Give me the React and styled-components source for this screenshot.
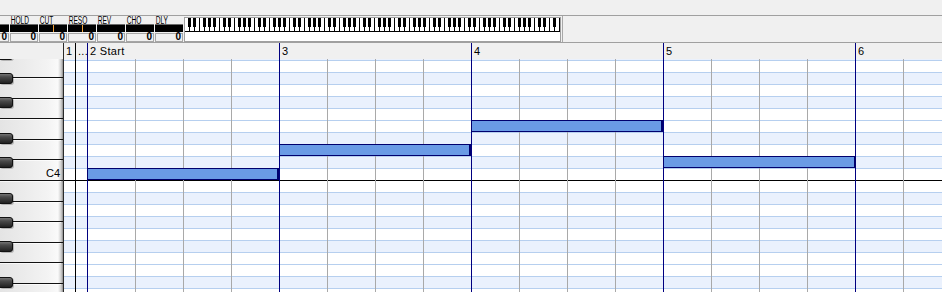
import React from "react";
import styled, { createGlobalStyle } from "styled-components";

const NAVY = "#000080";
const BEAT = "#a9a9a9";
const ROWLINE = "#b6cfef";
const BLACKROW = "#eaf1fd";

const GlobalStyle = createGlobalStyle`
  html, body { margin: 0; padding: 0; background: #f0f0f0; }
  body { font-family: "Liberation Sans", Arial, sans-serif; color: #000; }
`;

const Window = styled.div`
  width: 942px;
  height: 292px;
  overflow: hidden;
  background: #f0f0f0;
  display: flex;
  flex-direction: column;
`;

const TopStrip = styled.div`
  height: 15px;
  flex: none;
  border-bottom: 1px solid #a0a0a0;
`;

const Toolbar = styled.div`
  height: 26px;
  flex: none;
  display: flex;
  border-bottom: 1px solid #a0a0a0;
`;

const ControlSection = styled.div`
  width: 562px;
  flex: none;
  overflow: hidden;
  border-right: 1px solid #a8a8a8;
`;

const ControlStrip = styled.div`
  display: flex;
  gap: 1px;
  margin-left: -19px;
`;

const Param = styled.div`
  width: 28px;
  flex: none;
  display: flex;
  flex-direction: column;
`;

const ParamLabel = styled.div`
  height: 8px;
  box-sizing: border-box;
  padding: 1px 0 0 1px;
  font-size: 10px;
  line-height: 8px;
  white-space: nowrap;
  transform: scaleX(0.66);
  transform-origin: left center;
`;

const ParamBar = styled.div`
  position: relative;
  height: 8px;
  margin-bottom: 1px;
  box-sizing: border-box;
  background: #000;
  border-top: 1px solid #6a6a6a;

  &::after {
    content: "";
    display: ${({ $tick }) => ($tick ? "block" : "none")};
    position: absolute;
    top: 0;
    bottom: 0;
    left: 14px;
    width: 1px;
    background: #f2a33a;
  }
`;

const ParamValue = styled.div`
  height: 9px;
  box-sizing: border-box;
  border: 1px solid #a6a6a6;
  padding-right: 1px;
  text-align: right;
  font-size: 10px;
  font-weight: bold;
  line-height: 6px;
`;

const MiniKeyboard = styled.div`
  flex: none;
  width: 375px;
  height: 23px;
  margin-top: 1px;
  border: 1px solid #a0a0a0;
  background: #fff;

  svg {
    display: block;
  }
`;

const Main = styled.div`
  flex: 1;
  min-height: 0;
  display: flex;
`;

const KeysColumn = styled.div`
  width: 63px;
  flex: none;
  display: flex;
  flex-direction: column;
  border-right: 1px solid #2a2a2a;
`;

const RulerCorner = styled.div`
  height: 16px;
  flex: none;
`;

const Keys = styled.div`
  flex: 1;
  overflow: hidden;

  svg {
    display: block;
  }
`;

const RollColumn = styled.div`
  flex: 1;
  min-width: 0;
  display: flex;
  flex-direction: column;
  overflow: hidden;
`;

const Ruler = styled.div`
  height: 16px;
  flex: none;
  display: flex;
  font-size: 11px;
  line-height: 17px;
  letter-spacing: 0.3px;
`;

const RulerCell = styled.div`
  width: ${({ $w }) => ($w ? `${$w}px` : "auto")};
  flex: ${({ $w }) => ($w ? "none" : "1")};
  box-sizing: border-box;
  padding-left: 2px;
  border-right: ${({ $line }) => ($line ? `1px solid ${$line}` : "none")};
  overflow: hidden;
  white-space: nowrap;
`;

const Grid = styled.div`
  flex: 1;
  overflow: hidden;
  background: #fff;
`;

const Rows = styled.div`
  margin-top: -11px;
  display: flex;
  flex-direction: column;
`;

// vertical lines shared by every row (x relative to grid start)
const VLINES = [[11, "#000"], [23, NAVY]];
for (let m = 0; m < 5; m++) {
  const base = 23 + 192 * m;
  VLINES.push([base + 48, BEAT], [base + 96, BEAT], [base + 144, BEAT]);
  if (m < 4) VLINES.push([base + 192, NAVY]);
}
const vlineLayers = VLINES.map(
  ([x, c]) => `linear-gradient(${c}, ${c}) ${x}px 0 / 1px 100% no-repeat`
).join(", ");

const Row = styled.div`
  position: relative;
  height: 12px;
  flex: none;
  background: ${vlineLayers},
    linear-gradient(${({ $line }) => $line}, ${({ $line }) => $line}) 0 0 / 100% 1px no-repeat,
    ${({ $black }) => ($black ? BLACKROW : "#fff")};
`;

const Note = styled.div`
  position: absolute;
  top: 0;
  left: ${({ $x }) => $x}px;
  width: ${({ $w }) => $w}px;
  height: 12px;
  box-sizing: border-box;
  background: #6a9be5;
  border: 1px solid #00006e;
  border-right-width: 2px;
`;

const BLACK_PC = [1, 3, 6, 8, 10];
const isBlack = (p) => BLACK_PC.includes(p % 12);

const PARAMS = [
  { label: "PAN" },
  { label: "HOLD" },
  { label: "CUT", tick: true },
  { label: "RESO", tick: true },
  { label: "REV" },
  { label: "CHO" },
  { label: "DLY" },
];

const NOTES = [
  { pitch: 60, x: 23, w: 192 },
  { pitch: 62, x: 215, w: 192 },
  { pitch: 64, x: 407, w: 192 },
  { pitch: 61, x: 599, w: 193 },
];

const MEASURES = [
  { w: 12, line: "#000", text: "1" },
  { w: 12, line: NAVY, text: "..." },
  { w: 192, line: NAVY, text: "2 Start" },
  { w: 192, line: NAVY, text: "3" },
  { w: 192, line: NAVY, text: "4" },
  { w: 192, line: NAVY, text: "5" },
  { text: "6" },
];

function MiniKeys() {
  const whites = 75;
  const blackAfter = [0, 1, 3, 4, 5];
  return (
    <svg width="375" height="23" viewBox="0 0 375 23">
      <rect x="0" y="0" width="375" height="23" fill="#fff" />
      {Array.from({ length: whites }, (_, i) => (
        <rect key={`s${i}`} x={i * 5 + 4} y="0" width="1" height="14" fill="#000" />
      ))}
      {Array.from({ length: whites - 1 }, (_, i) =>
        blackAfter.includes(i % 7) ? (
          <rect key={`b${i}`} x={i * 5 + 3} y="0" width="3" height="9" fill="#000" />
        ) : null
      )}
      <rect x="0" y="13" width="375" height="1" fill="#000" />
    </svg>
  );
}

function PianoKeys() {
  const top = 59; // page y of svg top
  const c4Bottom = 180 - top;
  const wk = 144 / 7;
  const bounds = [];
  for (let k = -6; k <= 6; k++) bounds.push(Math.round(c4Bottom + k * wk));
  const blacks = [];
  for (let p = 50; p <= 70; p++) {
    if (isBlack(p)) blacks.push(168 - (p - 60) * 12 - top);
  }
  return (
    <svg width="63" height="233" viewBox="0 0 63 233">
      <defs>
        <linearGradient id="wk" x1="0" y1="0" x2="1" y2="0">
          <stop offset="0" stopColor="#e4e4e4" />
          <stop offset="0.75" stopColor="#f3f3f3" />
          <stop offset="0.92" stopColor="#fafafa" />
          <stop offset="0.97" stopColor="#cfcfcf" />
          <stop offset="1" stopColor="#8c8c8c" />
        </linearGradient>
        <linearGradient id="bk" x1="0" y1="0" x2="0" y2="1">
          <stop offset="0" stopColor="#7a7a7a" />
          <stop offset="0.35" stopColor="#4a4a4a" />
          <stop offset="1" stopColor="#1e1e1e" />
        </linearGradient>
      </defs>
      <rect x="0" y="0" width="63" height="233" fill="url(#wk)" />
      {bounds.map((y) => (
        <g key={`w${y}`}>
          <rect x="0" y={y + 1} width="61" height="1" fill="#ffffff" opacity="0.7" />
          <rect x="0" y={y} width="63" height="1" fill="#111" />
        </g>
      ))}
      {blacks.map((y) => (
        <g key={`k${y}`}>
          <rect x="0" y={y + 2} width="14" height="11" rx="3" fill="#000" opacity="0.22" />
          <rect x="-3" y={y + 1.5} width="15.5" height="10" rx="2.5" fill="url(#bk)" stroke="#111" strokeWidth="1" />
        </g>
      ))}
      <text x="60" y="118" textAnchor="end" fontSize="11" fontFamily="Liberation Sans, Arial, sans-serif" fill="#000">
        C4
      </text>
    </svg>
  );
}

export default function App() {
  const pitches = [];
  for (let p = 70; p >= 50; p--) pitches.push(p);

  return (
    <>
      <GlobalStyle />
      <Window>
        <TopStrip />
        <Toolbar>
          <ControlSection>
            <ControlStrip>
              {PARAMS.map((p) => (
                <Param key={p.label}>
                  <ParamLabel>{p.label}</ParamLabel>
                  <ParamBar $tick={p.tick} />
                  <ParamValue>0</ParamValue>
                </Param>
              ))}
              <MiniKeyboard>
                <MiniKeys />
              </MiniKeyboard>
            </ControlStrip>
          </ControlSection>
        </Toolbar>
        <Main>
          <KeysColumn>
            <RulerCorner />
            <Keys>
              <PianoKeys />
            </Keys>
          </KeysColumn>
          <RollColumn>
            <Ruler>
              {MEASURES.map((m, i) => (
                <RulerCell key={i} $w={m.w} $line={m.line}>
                  {m.text}
                </RulerCell>
              ))}
            </Ruler>
            <Grid>
              <Rows>
                {pitches.map((p) => (
                  <Row key={p} $black={isBlack(p)} $line={p === 59 ? "#000" : ROWLINE}>
                    {NOTES.filter((n) => n.pitch === p).map((n) => (
                      <Note key={n.x} $x={n.x} $w={n.w} />
                    ))}
                  </Row>
                ))}
              </Rows>
            </Grid>
          </RollColumn>
        </Main>
      </Window>
    </>
  );
}
